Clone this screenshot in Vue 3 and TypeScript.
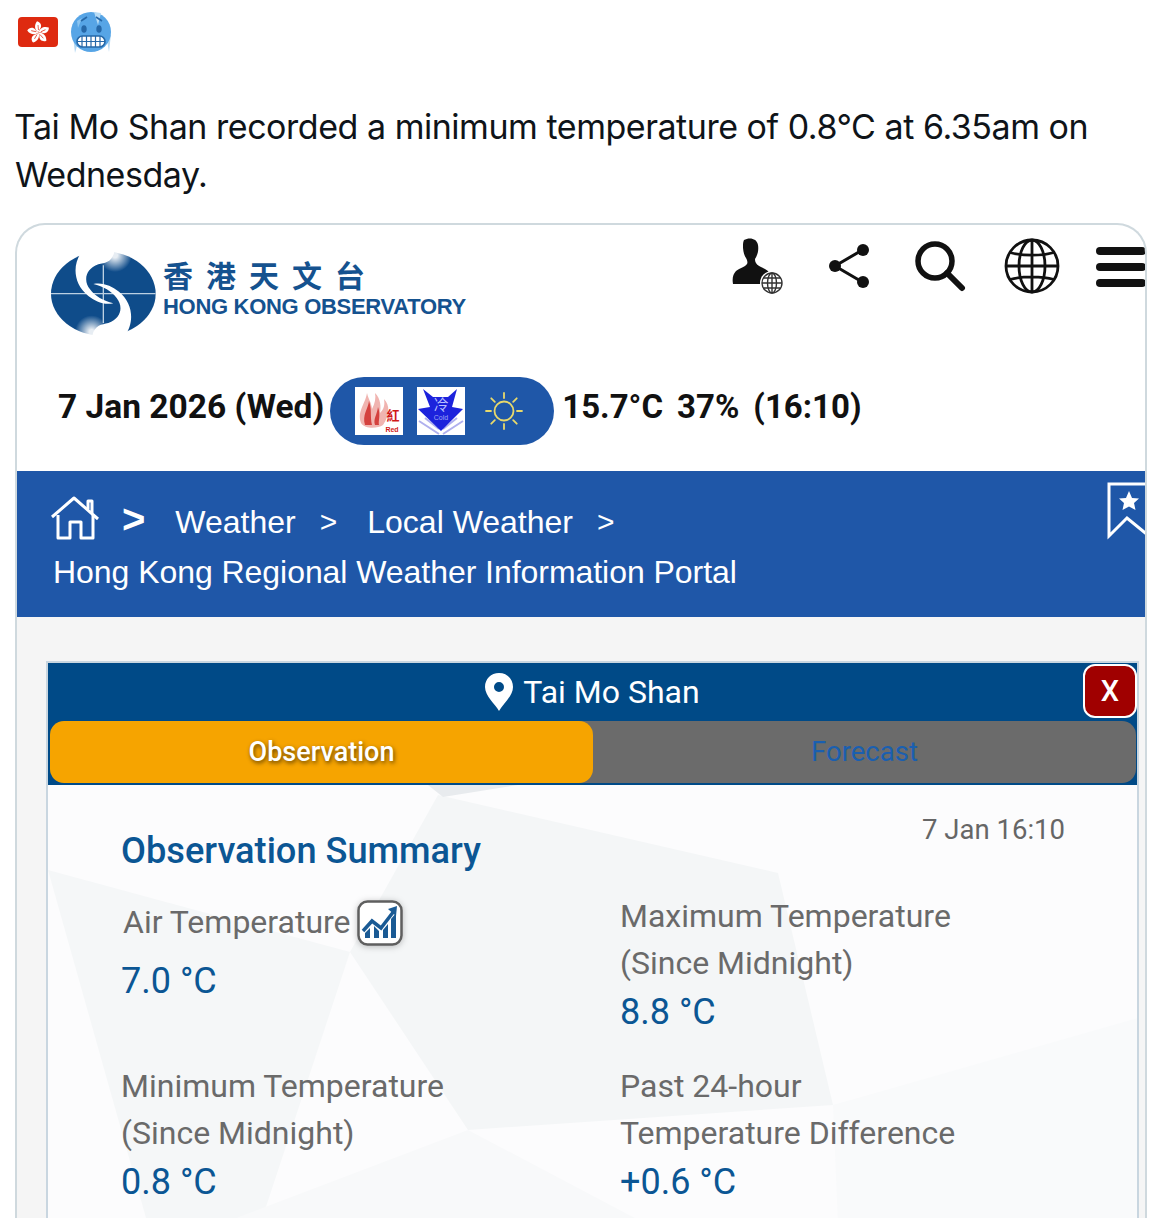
<script setup lang="ts">
const petals: number[] = [0, 72, 144, 216, 288];
const cells = [
  { l: ["Minimum Temperature", "(Since Midnight)"], v: "0.8 °C" },
  { l: ["Past 24-hour", "Temperature Difference"], v: "+0.6 °C" },
];
</script>

<template>
  <div class="page">
    <div class="emoji-row">
      <svg class="flag" width="40" height="30" viewBox="0 0 40 30">
        <rect width="40" height="30" rx="4" fill="#de2a10" />
        <g v-for="a in petals" :key="a" :transform="`rotate(${a} 20.500 15.500)`">
          <path d="M20.500 15.500C16.500 13 16 8 19 4.200C22.800 5 24.200 9 22.300 11.500C21.300 12.700 20.500 14 20.500 15.500Z" fill="#fff" />
          <path d="M20.500 13L20 8" stroke="#de2a10" stroke-width="0.700" />
        </g>
      </svg>
      <svg class="cold" width="44" height="44" viewBox="0 0 44 44">
        <path d="M3 24L5 41L8 30Z M37 28L39 40L41 22Z" fill="#b4d8f2" />
        <circle cx="21" cy="20" r="20" fill="#57a5e6" />
        <path d="M24 0L31 1L28 13Z" fill="#b8dcf5" />
        <path d="M7 9L12 6L8 16Z" fill="#8ac4f0" />
        <ellipse cx="14" cy="17" rx="2.700" ry="3.800" fill="#2668a8" />
        <ellipse cx="29" cy="17" rx="2.700" ry="3.800" fill="#2668a8" />
        <path d="M11 9L17 5M32 9L26 5" stroke="#2668a8" stroke-width="1.600" fill="none" />
        <rect x="7" y="24" width="28" height="11" rx="5.500" fill="#fff" stroke="#2668a8" stroke-width="1.600" />
        <path d="M12 24V35M16.500 24V35M21 24V35M25.500 24V35M30 24V35M7 29.500H35" stroke="#2668a8" stroke-width="1.200" />
      </svg>
    </div>

    <p class="tweet">Tai Mo Shan recorded a minimum temperature of 0.8°C at 6.35am on Wednesday.</p>

    <div class="card">
      <div class="top">
        <div class="logo">
          <svg width="108" height="86" viewBox="15 15 324 258">
            <defs>
              <radialGradient id="fadeTip">
                <stop offset="0.15" stop-color="#fff" stop-opacity="0.9" />
                <stop offset="1" stop-color="#fff" stop-opacity="0" />
              </radialGradient>
            </defs>
            <ellipse cx="175" cy="143" rx="157" ry="127" fill="#0f4c8a" />
            <path d="M175 58V231M18 143H332" stroke="#bcd0e2" stroke-width="4" />
            <path d="M110 5V18C85 50 80 110 130 150C150 165 175 178 205 172C175 165 150 150 135 130C115 105 120 70 160 55C180 50 200 50 208 18V5Z" fill="#fff" />
            <path d="M240 281V268C265 236 270 176 220 136C200 121 175 108 145 114C175 121 200 136 215 156C235 181 230 216 190 231C170 236 150 236 142 268V281Z" fill="#fff" />
            <circle cx="210" cy="28" r="50" fill="url(#fadeTip)" />
            <circle cx="140" cy="258" r="50" fill="url(#fadeTip)" />
          </svg>
          <div class="logo-text">
            <div class="logo-zh">香港天文台</div>
            <div class="logo-en">HONG KONG OBSERVATORY</div>
          </div>
        </div>
        <div class="tools">
          <svg class="t-user" width="52" height="56" viewBox="0 0 52 56">
            <path d="M12 2C17-1 25 0 26 7C27 13 25 18 23 21C23 25 25 27 29 29C34 31 37 33 38 36L34 46H1C0 41 1 36 4 33C8 30 13 29 15 26C16 24 15 22 14 20C11 16 10 6 12 2Z" fill="#111" />
            <circle cx="40" cy="45" r="12" fill="#fff" />
            <g fill="none" stroke="#333" stroke-width="1.400">
              <circle cx="40" cy="45" r="10" />
              <ellipse cx="40" cy="45" rx="4.500" ry="10" />
              <path d="M40 35V55M30 45H50M31.500 40H48.500M31.500 50H48.500" />
            </g>
          </svg>
          <svg class="t-share" width="44" height="46" viewBox="0 0 44 46">
            <path d="M36 6L7 23L36 40" fill="none" stroke="#111" stroke-width="3" />
            <circle cx="35" cy="7" r="6" fill="#111" />
            <circle cx="7" cy="23" r="6" fill="#111" />
            <circle cx="35" cy="39" r="6" fill="#111" />
          </svg>
          <svg class="t-search" width="52" height="52" viewBox="0 0 52 52">
            <circle cx="21" cy="21" r="17" fill="none" stroke="#111" stroke-width="5.500" />
            <path d="M33 33L48 48" stroke="#111" stroke-width="6" stroke-linecap="round" />
          </svg>
          <svg class="t-globe" width="56" height="56" viewBox="0 0 56 56">
            <g fill="none" stroke="#111" stroke-width="2.800">
              <circle cx="28" cy="28" r="26" />
              <ellipse cx="28" cy="28" rx="13" ry="26" />
              <path d="M28 2V54M2 28H54M6 14.500C18 18 38 18 50 14.500M6 41.500C18 38 38 38 50 41.500" />
            </g>
          </svg>
          <div class="burger"><i></i><i></i><i></i></div>
        </div>
      </div>

      <div class="status">
        <span class="date">7 Jan 2026 (Wed)</span>
        <div class="pill">
          <svg class="warn" width="48" height="48" viewBox="0 0 48 48">
            <rect width="48" height="48" fill="#fff" />
            <path d="M6 36C2 24 10 18 12 6C14 14 16 14 17 22C20 16 21 11 20 6C26 12 26 20 25 26C29 22 30 18 29 12C35 18 35 28 28 38C22 42 10 42 6 36Z" fill="#f0b4b0" />
            <path d="M10 38C7 28 13 22 14 14C17 22 15 30 17 38ZM20 38C18 32 22 28 23 20C26 28 23 34 24 38Z" fill="#d4413e" />
            <text x="38" y="33" class="mini-zh" fill="#d01818">紅</text>
            <text x="37" y="45" class="mini-en" fill="#d01818">Red</text>
          </svg>
          <svg class="warn" width="48" height="48" viewBox="0 0 48 48">
            <rect width="48" height="48" fill="#fff" />
            <path d="M2 34L22 47M8 31L22 42M46 34L26 47M40 31L26 42" stroke="#b0b0ee" stroke-width="2" />
            <path d="M6 2L16 10H31L40 2L35 20L46 22L24 44L1 22L13 20Z" fill="#1c22dc" />
            <text x="24" y="23" class="mini-cold" fill="#b9c0ff">冷</text>
            <text x="24" y="33" class="mini-en2" fill="#9da4f5">Cold</text>
          </svg>
          <svg class="sun" width="38" height="38" viewBox="0 0 38 38">
            <circle cx="19" cy="19" r="9.500" fill="none" stroke="#e8d96b" stroke-width="1.800" />
            <path d="M19 1V6M19 32V37M1 19H6M32 19H37M6.300 6.300L9.800 9.800M28.200 28.200L31.700 31.700M31.700 6.300L28.200 9.800M9.800 28.200L6.300 31.700" stroke="#e8d96b" stroke-width="1.800" stroke-linecap="round" />
          </svg>
        </div>
        <span class="date reading">15.7°C</span>
        <span class="date reading">37%</span>
        <span class="date reading">(16:10)</span>
      </div>

      <div class="crumbs">
        <div class="crumb-row">
          <svg class="home" width="50" height="46" viewBox="0 0 50 46">
            <g fill="none" stroke="#fff" stroke-width="3" stroke-linejoin="round">
              <path d="M2 22L24 3L48 24" />
              <path d="M38 14V6H42V18" />
              <path d="M8 20V43H20V27H31V43H43V20" />
            </g>
          </svg>
          <span class="sep big">&gt;</span>
          <span>Weather</span>
          <span class="sep">&gt;</span>
          <span>Local Weather</span>
          <span class="sep">&gt;</span>
        </div>
        <div class="crumb-last">Hong Kong Regional Weather Information Portal</div>
        <svg class="bookmark" width="40" height="58" viewBox="0 0 40 58">
          <path d="M2 2H42V54L20 36L2 54Z" fill="none" stroke="#fff" stroke-width="3" />
          <path d="M22 9L25 16L32 16.500L27 21L28.500 28L22 24.500L15.500 28L17 21L12 16.500L19 16Z" fill="#fff" />
        </svg>
      </div>

      <div class="grey">
        <div class="panel">
          <div class="panel-head">
            <svg width="28" height="38" viewBox="0 0 28 38">
              <path fill-rule="evenodd" d="M14 0C6 0 0 6 0 14C0 23 10 31 14 38C18 31 28 23 28 14C28 6 22 0 14 0ZM14 9A5 5 0 1 1 14 19A5 5 0 1 1 14 9Z" fill="#fff" />
            </svg>
            <span>Tai Mo Shan</span>
            <button class="close">X</button>
          </div>
          <div class="tabs">
            <div class="tab on">Observation</div>
            <div class="tab off">Forecast</div>
          </div>
          <div class="body">
            <svg class="facets" width="1100" height="440" viewBox="0 0 1100 440">
              <path d="M390 10L730 88L785 320L420 345L302 167Z" fill="#f4f6f7" />
              <path d="M0 85L302 167L212 440H100Z" fill="#f5f7f8" />
              <path d="M380 0H470L395 12Z" fill="#e8ebee" />
              <path d="M785 320L1100 230V440H790Z" fill="#f9fafb" />
              <path d="M170 440L420 345L600 440Z" fill="#f8f9fa" />
            </svg>
            <div class="stamp">7 Jan 16:10</div>
            <h2>Observation Summary</h2>
            <div class="grid">
              <div class="cell air">
                <div class="label air-label">
                  Air Temperature
                  <svg class="chart" width="46" height="46" viewBox="0 0 46 46">
                    <rect x="1.500" y="1.500" width="43" height="43" rx="9" fill="#fff" stroke="#5f5f5f" stroke-width="2.500" />
                    <path d="M6 31L15 21L24 28L37 11" fill="none" stroke="#1a5a94" stroke-width="3.500" />
                    <path d="M31 9L40 6L39 16Z" fill="#1a5a94" />
                    <path d="M8 38V33L13 28V38ZM17 38V26L22 31V38ZM26 38V30L31 24V38ZM34 38V19L39 13V38Z" fill="#1a5a94" />
                  </svg>
                </div>
                <div class="value">7.0 °C</div>
              </div>
              <div class="cell">
                <div class="label">Maximum Temperature</div>
                <div class="label">(Since Midnight)</div>
                <div class="value">8.8 °C</div>
              </div>
              <div class="cell" v-for="c in cells" :key="c.v">
                <div class="label" v-for="t in c.l" :key="t">{{ t }}</div>
                <div class="value">{{ c.v }}</div>
              </div>
            </div>
          </div>
        </div>
      </div>
    </div>
  </div>
</template>

<style>
html, body { margin: 0; background: #fff; }
</style>

<style scoped>
.page { width: 1158px; height: 1218px; overflow: hidden; background: #fff; }
.emoji-row { display: flex; align-items: flex-start; height: 90px; padding: 17px 0 0 18px; gap: 12px; box-sizing: border-box; }
.cold { margin-top: -5px; }
.tweet { margin: 13px 0 0 15px; width: 1110px; height: 120px; font: 400 34px/48px Inter, sans-serif; color: #0f1419; letter-spacing: -0.47px; text-indent: -1px; }
.card { margin: 0 0 0 15px; width: 1132px; border: 2px solid #cfd9de; border-bottom: 0; border-radius: 30px 30px 0 0; overflow: hidden; box-sizing: border-box; background: #fff; }
.top { display: flex; justify-content: space-between; height: 134px; padding: 13px 0 0 33px; box-sizing: border-box; }
.logo { display: flex; align-items: flex-start; gap: 5px; padding-top: 13px; }
.logo-text { padding-top: 7px; color: #15528f; }
.logo-zh { font: 700 30px/32px "Noto Sans CJK TC", sans-serif; letter-spacing: 13px; }
.logo-en { font: 700 22px/24px "Liberation Sans", sans-serif; letter-spacing: -0.3px; margin-top: 5px; }
.tools { display: flex; align-items: flex-start; }
.t-user { margin: 0; }
.t-share { margin: 5px 0 0 44px; }
.t-search { margin: 2px 0 0 42px; }
.t-globe { margin: 0 0 0 38px; }
.burger { width: 50px; margin: 7px -1px 0 36px; display: flex; flex-direction: column; gap: 8px; padding-top: 2px; }
.burger i { display: block; height: 8px; border-radius: 4px; background: #111; }
.status { display: flex; align-items: center; height: 112px; padding: 0 0 9px 41px; box-sizing: border-box; }
.date { font: 700 33.500px/40px Roboto, sans-serif; color: #111; white-space: nowrap; margin-bottom: 8px; }
.reading { margin-right: 14px; font-size: 33px; }
.pill { display: flex; flex: none; align-items: center; width: 224px; height: 68px; margin: 0 8px 0 6px; padding-left: 25px; background: #1f57a8; border-radius: 34px; box-sizing: border-box; gap: 14px; }
.warn { flex: none; }
.sun { flex: none; margin-left: 6px; }
.mini-zh { font: 700 13px "Noto Sans CJK TC", sans-serif; text-anchor: middle; }
.mini-en { font: 700 7px "Liberation Sans", sans-serif; text-anchor: middle; }
.mini-cold { font: 400 15px "Noto Sans CJK TC", sans-serif; text-anchor: middle; }
.mini-en2 { font: 400 7px "Liberation Sans", sans-serif; text-anchor: middle; }
.crumbs { height: 146px; background: #1f57a8; color: #fff; padding: 25px 0 0 33px; box-sizing: border-box; position: relative; font: 400 32px/44px "Liberation Sans", sans-serif; }
.crumb-row { display: flex; align-items: center; height: 52px; }
.home { margin-right: 22px; margin-top: -8px; }
.sep { margin: 0 30px 0 24px; font-size: 30px; }
.sep.big { margin: -6px 30px 0 0; font-size: 40px; font-weight: 700; }
.crumb-last { margin: 2px 0 0 3px; letter-spacing: -0.05px; }
.bookmark { position: absolute; right: -2px; top: 11px; }
.grey { background: #f5f5f5; padding: 44px 6px 0 29px; }
.panel { border: 2px solid #c9d6e0; border-bottom: 0; background: #004a87; position: relative; }
.panel-head { display: flex; align-items: center; justify-content: center; gap: 10px; height: 58px; color: #fff; font: 400 32px/40px Roboto, sans-serif; position: relative; }
.close { position: absolute; right: 0; top: 1px; width: 54px; height: 54px; border: 2px solid #fff; border-radius: 12px; background: #a00000; color: #fff; font: 500 29px/1 Roboto, sans-serif; padding: 0; }
.tabs { display: flex; height: 64px; padding: 0 1px 2px 2px; box-sizing: border-box; }
.tab { flex: 1; display: flex; align-items: center; justify-content: center; font: 500 27px/32px Roboto, sans-serif; }
.tab.on { background: #f6a400; color: #fff; border-radius: 14px; text-shadow: 1px 2px 4px rgba(60, 40, 0, 0.8); position: relative; z-index: 1; }
.tab.off { background: #6b6b6b; color: #1a5fb0; border-radius: 0 14px 14px 0; margin-left: -14px; padding-left: 14px; font-weight: 400; font-size: 27.500px; }
.body { position: relative; overflow: hidden; background: #fcfcfd; padding: 22px 72px 0 73px; height: 440px; box-sizing: border-box; }
.facets { position: absolute; left: 0; top: 0; }
.stamp { position: absolute; right: 72px; top: 28px; font: 400 27.500px/34px Roboto, sans-serif; color: #666; }
h2 { position: relative; margin: 21px 0 0 0; font: 500 36.200px/46px Roboto, sans-serif; color: #0b5694; }
.grid { position: relative; display: grid; grid-template-columns: 499px 1fr; row-gap: 27px; margin-top: 19px; }
.cell { min-height: 133px; }
.air { padding-top: 6px; padding-left: 2px; }
.air .value { margin-left: -2px; margin-top: 12px; }
.label { font: 400 32px/47px Roboto, sans-serif; color: #6a6a6a; }
.air-label { display: flex; align-items: center; gap: 6px; }
.chart { filter: drop-shadow(0 1px 3px rgba(0, 0, 0, 0.25)); }
.value { font: 400 36px/47px Roboto, sans-serif; color: #0b5694; margin-top: 2px; }
</style>
